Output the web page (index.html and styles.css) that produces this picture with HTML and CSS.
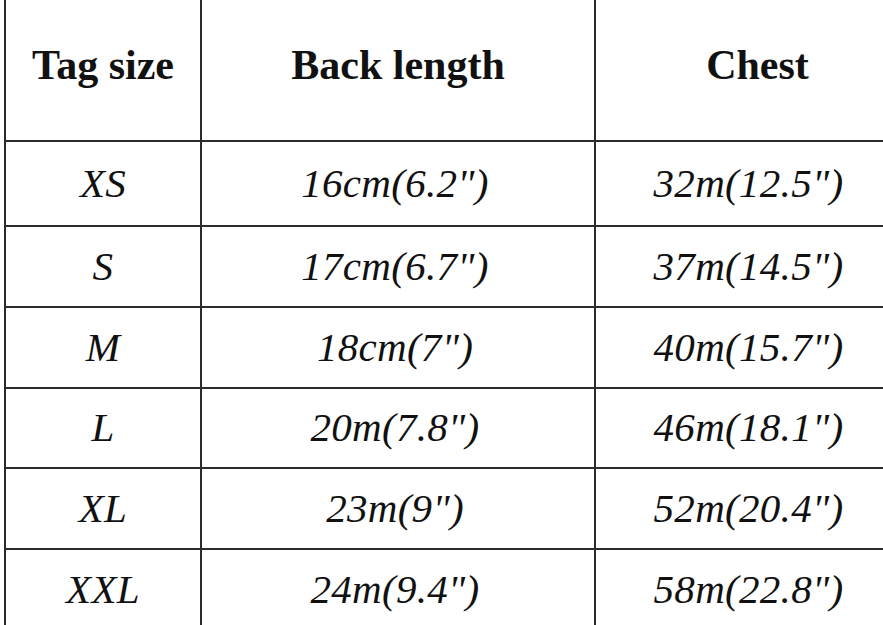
FILE: index.html
```html
<!DOCTYPE html>
<html>
<head>
<meta charset="utf-8">
<link rel="stylesheet" href="styles.css">
</head>
<body>
<div class="sheet">
  <div class="cell head first">Tag size</div>
  <div class="cell head">Back length</div>
  <div class="cell head">Chest</div>

  <div class="cell first">XS</div>
  <div class="cell mid">16cm(6.2")</div>
  <div class="cell last">32m(12.5")</div>

  <div class="cell first">S</div>
  <div class="cell mid">17cm(6.7")</div>
  <div class="cell last">37m(14.5")</div>

  <div class="cell first">M</div>
  <div class="cell mid">18cm(7")</div>
  <div class="cell last">40m(15.7")</div>

  <div class="cell first">L</div>
  <div class="cell mid">20m(7.8")</div>
  <div class="cell last">46m(18.1")</div>

  <div class="cell first">XL</div>
  <div class="cell mid">23m(9")</div>
  <div class="cell last">52m(20.4")</div>

  <div class="cell first">XXL</div>
  <div class="cell mid">24m(9.4")</div>
  <div class="cell last">58m(22.8")</div>
</div>
</body>
</html>
```

FILE: styles.css
```css
html, body {
  margin: 0;
  padding: 0;
  background: #ffffff;
  overflow: hidden;
}

.sheet {
  margin-left: 4px;
  display: grid;
  grid-template-columns: 198px 394px 325px;
  grid-template-rows: 142px 85px 81px 81px 80px 81px 81px;
  width: 917px;
  font-family: "Liberation Serif", "Times New Roman", serif;
  color: #111111;
}

.cell {
  box-sizing: border-box;
  display: flex;
  align-items: center;
  justify-content: center;
  border-right: 2px solid #2b2b2b;
  border-bottom: 2px solid #2b2b2b;
  font-style: italic;
  font-size: 41px;
  letter-spacing: 0.3px;
  padding-bottom: 2px;
}

.cell.first {
  border-left: 2px solid #2b2b2b;
}

.cell.mid {
  padding-right: 6px;
}

.cell.last {
  padding-right: 18px;
}

.cell.head {
  font-style: normal;
  font-weight: bold;
  font-size: 42px;
  letter-spacing: 0;
  padding-bottom: 10px;
}
```
